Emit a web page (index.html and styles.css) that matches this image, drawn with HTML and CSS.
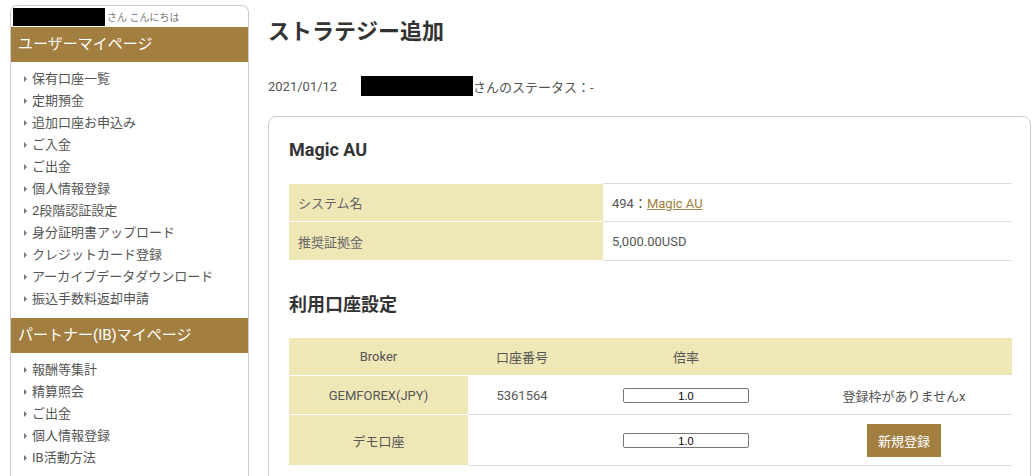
FILE: index.html
```html
<!DOCTYPE html>
<html lang="ja">
<head>
<meta charset="utf-8">
<title>ストラテジー追加</title>
<link rel="stylesheet" href="styles.css">
</head>
<body>
<div class="page">
  <aside class="sidebar">
    <div class="greet"><span class="mask"></span><span class="greet-text">さん こんにちは</span></div>
    <div class="side-head">ユーザーマイページ</div>
    <ul class="menu">
      <li>保有口座一覧</li>
      <li>定期預金</li>
      <li>追加口座お申込み</li>
      <li>ご入金</li>
      <li>ご出金</li>
      <li>個人情報登録</li>
      <li>2段階認証設定</li>
      <li>身分証明書アップロード</li>
      <li>クレジットカード登録</li>
      <li>アーカイブデータダウンロード</li>
      <li>振込手数料返却申請</li>
    </ul>
    <div class="side-head">パートナー(IB)マイページ</div>
    <ul class="menu">
      <li>報酬等集計</li>
      <li>精算照会</li>
      <li>ご出金</li>
      <li>個人情報登録</li>
      <li>IB活動方法</li>
    </ul>
  </aside>
  <main class="main">
    <h1 class="title">ストラテジー追加</h1>
    <div class="status"><span class="date">2021/01/12</span><span class="mask mask-lg"></span><span>さんのステータス：-</span></div>
    <section class="card">
      <h2 class="sub">Magic AU</h2>
      <table class="info">
        <tr><th>システム名</th><td>494：<a href="#">Magic AU</a></td></tr>
        <tr><th>推奨証拠金</th><td>5,000.00USD</td></tr>
      </table>
      <h2 class="sub sub-2">利用口座設定</h2>
      <table class="acct">
        <tr class="hd"><th class="c1">Broker</th><th class="c2">口座番号</th><th class="c3">倍率</th><th class="c4"></th></tr>
        <tr><th>GEMFOREX(JPY)</th><td>5361564</td><td><input class="rate" type="text" value="1.0"></td><td>登録枠がありませんx</td></tr>
        <tr class="tall"><th>デモ口座</th><td></td><td><input class="rate" type="text" value="1.0"></td><td><button class="btn">新規登録</button></td></tr>
      </table>
    </section>
  </main>
</div>
</body>
</html>
```

FILE: styles.css
```css
* { box-sizing: border-box; }
body {
  margin: 0;
  font-family: Roboto, "Noto Sans CJK JP", sans-serif;
  color: #555;
  background: #fff;
  font-size: 13px;
}
.page {
  display: flex;
  align-items: flex-start;
  padding: 5px 0 0 10px;
}
.sidebar {
  width: 239px;
  flex: none;
  border: 1px solid #ccc;
  border-bottom: none;
  border-radius: 7px 7px 0 0;
  min-height: 480px;
}
.greet {
  height: 21px;
  display: flex;
  align-items: center;
  padding-left: 2px;
}
.mask {
  display: inline-block;
  background: #000;
  width: 92px;
  height: 18px;
}
.greet-text {
  font-size: 10px;
  color: #777;
  margin-left: 2px;
}
.side-head {
  background: #a27e40;
  color: #fff;
  font-size: 15px;
  height: 35px;
  line-height: 35px;
  padding-left: 7px;
}
.menu {
  list-style: none;
  margin: 0;
  padding: 6px 0 8px 13px;
}
.menu li {
  line-height: 22px;
  height: 22px;
  display: flex;
  align-items: center;
  color: #555;
}
.menu li::before {
  content: "";
  width: 0;
  height: 0;
  border-left: 3px solid #777;
  border-top: 3px solid transparent;
  border-bottom: 3px solid transparent;
  margin-right: 5px;
}
.main {
  margin-left: 19px;
  width: 763px;
  flex: none;
}
.title {
  margin: 0;
  font-size: 22px;
  font-weight: 700;
  color: #333;
  line-height: 30px;
  padding-top: 12px;
}
.status {
  margin-top: 29px;
  height: 20px;
  display: flex;
  align-items: center;
  color: #555;
}
.date { width: 93px; }
.mask-lg { width: 112px; height: 20px; }
.card {
  margin-top: 20px;
  border: 1px solid #ccc;
  border-radius: 8px;
  padding: 20px 18px 30px 20px;
}
.sub {
  margin: 0;
  font-size: 18px;
  font-weight: 700;
  color: #333;
  line-height: 26px;
}
.sub-2 { margin-top: 31px; }
table {
  width: 723px;
  border-collapse: separate;
  border-spacing: 0;
  margin-top: 20px;
}
.info th, .info td {
  height: 39px;
  font-weight: 400;
  text-align: left;
  border-bottom: 1px solid #ddd;
}
.info tr:first-child th, .info tr:first-child td { border-top: 1px solid #ddd; }
.info th {
  width: 314px;
  background: #efe7b6;
  padding-left: 9px;
  border-color: #fff !important;
  color: #666;
}
.info td { padding-left: 9px; color: #555; }
.info a { color: #a27e40; }
.acct th, .acct td {
  font-weight: 400;
  text-align: center;
  padding: 0;
  color: #555;
}
.acct .hd th {
  background: #efe7b6;
  height: 38px;
  border-bottom: 1px solid #fff;
}
.acct tr:not(.hd) th {
  background: #efe7b6;
  height: 39px;
  border-bottom: 1px solid #fff;
}
.acct tr:not(.hd) td {
  border-bottom: 1px solid #ddd;
}
.acct tr.tall th, .acct tr.tall td { height: 51px; }
.c1 { width: 179px; }
.c2 { width: 108px; }
.c3 { width: 220px; }
.c4 { width: 216px; }
.rate {
  width: 126px;
  height: 15px;
  padding: 0;
  border: 1px solid #767676;
  border-radius: 2px;
  font-family: "Liberation Sans", Arial, sans-serif;
  font-size: 11px;
  text-align: center;
  color: #000;
  vertical-align: middle;
}
.btn {
  width: 74px;
  height: 33px;
  border: none;
  background: #a27e40;
  color: #fff;
  font-family: Roboto, "Noto Sans CJK JP", sans-serif;
  font-size: 13px;
  padding: 0;
  vertical-align: middle;
}
```
